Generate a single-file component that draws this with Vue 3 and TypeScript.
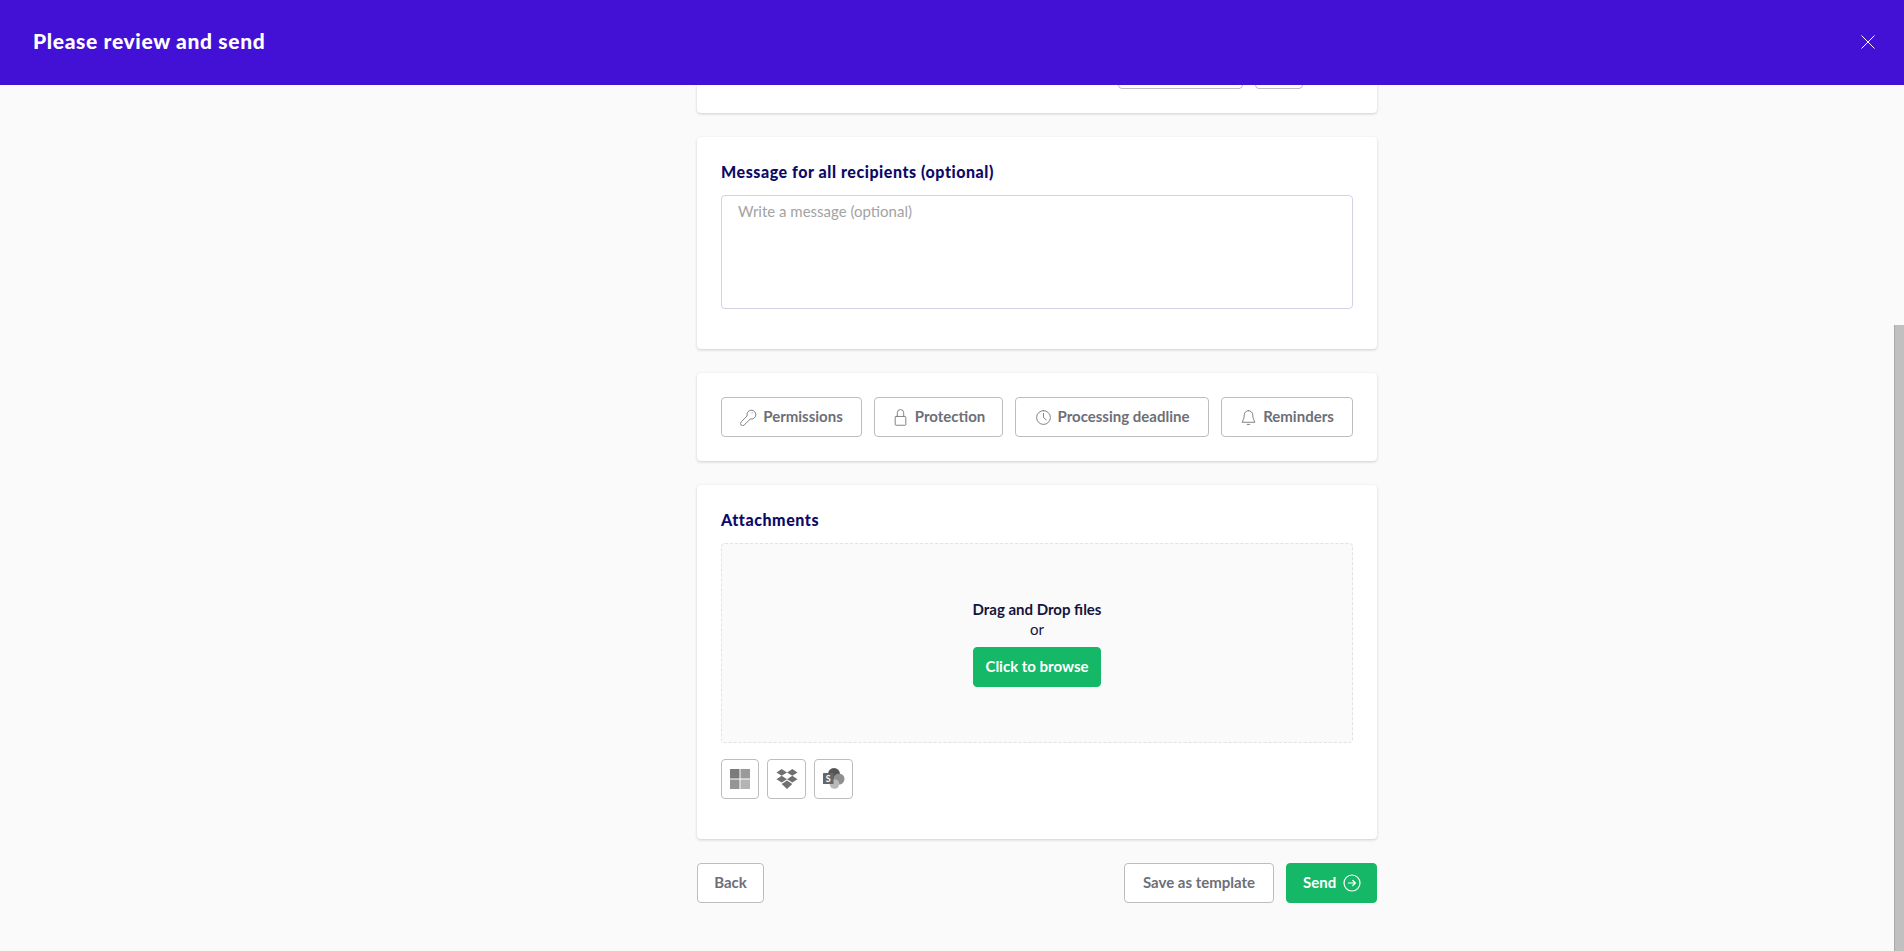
<template>
  <div class="page">
    <header class="topbar">
      <h1>Please review and send</h1>
      <button type="button" class="close" aria-label="Close">
        <svg width="14" height="14" viewBox="0 0 14 14"><path d="M0.5 0.5 13.5 13.5M13.5 0.5 0.5 13.5" stroke="#fff" stroke-width="1" fill="none" /></svg>
      </button>
    </header>

    <div class="body">
      <main class="content">
        <!-- scrolled away under the header, only the lower edge is left -->
        <section class="card card-cut">
          <span class="stub stub-wide"></span>
          <span class="stub stub-small"></span>
        </section>

        <section class="card card-message">
          <h2>Message for all recipients (optional)</h2>
          <textarea placeholder="Write a message (optional)"></textarea>
        </section>

        <section class="card card-options">
          <button v-for="o in options" :key="o.label" type="button" class="btn option" :style="{ width: o.width + 'px' }">
            <svg width="17" height="17" viewBox="0 0 16 16" fill="none" stroke="#77777c" stroke-width="0.85" stroke-linecap="round" stroke-linejoin="round">
              <path v-for="d in o.paths" :key="d" :d="d" />
            </svg>
            <span>{{ o.label }}</span>
          </button>
        </section>

        <section class="card card-attach">
          <h2>Attachments</h2>
          <div class="dropzone">
            <strong>Drag and Drop files</strong>
            <span>or</span>
            <button type="button" class="btn green browse"><span>Click to browse</span></button>
          </div>
          <div class="sources">
            <button type="button" class="btn source first" aria-label="OneDrive">
              <svg width="20" height="20" viewBox="0 0 20 20">
                <rect width="9.5" height="9.5" fill="#7b7b7b" />
                <rect x="10.5" width="9.5" height="9.5" fill="#9a9a9a" />
                <rect y="10.5" width="9.5" height="9.5" fill="#959595" />
                <rect x="10.5" y="10.5" width="9.5" height="9.5" fill="#b4b4b4" />
              </svg>
            </button>
            <button type="button" class="btn source" aria-label="Dropbox">
              <svg width="22" height="20" viewBox="0 0 21 20" fill="#707070">
                <path d="M5.200 0 10.500 3.400 5.200 6.800 0 3.400Z" />
                <path d="M15.800 0 21 3.400 15.800 6.800 10.500 3.400Z" />
                <path d="M5.200 6.800 10.500 10.200 5.200 13.600 0 10.200Z" />
                <path d="M15.800 6.800 21 10.200 15.800 13.600 10.500 10.200Z" />
                <path d="M10.500 11.600 15.800 15 10.500 20 5.200 15Z" />
              </svg>
            </button>
            <button type="button" class="btn source" aria-label="SharePoint">
              <svg width="22" height="22" viewBox="0 0 22 22">
                <circle cx="11" cy="6" r="6" fill="#555" />
                <circle cx="16" cy="11" r="5.500" fill="#8f8f8f" />
                <circle cx="11.500" cy="16" r="4.800" fill="#b9b9b9" />
                <rect x="0" y="5" width="10.500" height="11" rx="0.500" fill="#666" />
                <text x="5.200" y="13.800" text-anchor="middle" class="sp-letter">S</text>
              </svg>
            </button>
          </div>
        </section>

        <footer class="actions">
          <button type="button" class="btn back"><span>Back</span></button>
          <div class="actions-right">
            <button type="button" class="btn save"><span>Save as template</span></button>
            <button type="button" class="btn green send">
              <span>Send</span>
              <svg width="18" height="18" viewBox="0 0 18 18" fill="none" stroke="#fff" stroke-width="1.200" stroke-linecap="round" stroke-linejoin="round">
                <circle cx="9" cy="9" r="8" />
                <path d="M5.500 9H12.200M9.800 6.500 12.400 9 9.800 11.500" />
              </svg>
            </button>
          </div>
        </footer>
      </main>

      <div class="rail"><div class="thumb"></div></div>
    </div>
  </div>
</template>

<script setup lang="ts">
interface OptionButton { label: string; width: number; paths: string[] }

const options: OptionButton[] = [
  {
    label: 'Permissions',
    width: 141,
    paths: [
      'M6.600 6.200a4.200 4.200 0 1 1 3.200 3.200L3.900 15.100a1.300 1.300 0 0 1-2.900-2.900Z',
      'M11.300 3.600h.1',
    ],
  },
  {
    label: 'Protection',
    width: 129,
    paths: [
      'M3.800 7h8.400a.8.8 0 0 1 .8.8v6.700a.8.8 0 0 1-.8.8H3.800a.8.8 0 0 1-.8-.8V7.800a.8.8 0 0 1 .8-.8Z',
      'M5 7V3.500a3 3 0 0 1 6 0V7',
    ],
  },
  {
    label: 'Processing deadline',
    width: 194,
    paths: [
      'M8 1.500a6.500 6.500 0 1 0 0 13 6.500 6.500 0 0 0 0-13Z',
      'M8 4.200V8l2.600 2.200',
    ],
  },
  {
    label: 'Reminders',
    width: 132,
    paths: [
      'M8 1.500a4 4 0 0 0-4 4c0 4-1.500 5.500-2 7h12c-.5-1.500-2-3-2-7a4 4 0 0 0-4-4Z',
      'M6.800 14.500h2.400',
    ],
  },
]
</script>

<style>
html,
body {
  margin: 0;
  background: #fafafa;
  overflow: hidden;
}
</style>

<style scoped>
.page {
  height: 951px;
  display: flex;
  flex-direction: column;
  font-family: "Lato", "Noto Sans", sans-serif;
  background: #fafafa;
  overflow: hidden;
}

.topbar {
  flex: none;
  height: 85px;
  display: flex;
  align-items: center;
  justify-content: space-between;
  padding: 0 29px 0 33px;
  background: #4311d6;
  position: relative;
  z-index: 2;
}
.topbar h1 {
  margin: 0 0 4px;
  font-size: 21px;
  font-weight: 900;
  letter-spacing: 0.65px;
  color: #fff;
}
.close {
  display: flex;
  padding: 0;
  border: none;
  background: none;
  margin-top: -1px;
}

.body {
  flex: 1;
  display: flex;
  min-height: 0;
  position: relative;
}
.content {
  width: 680px;
  margin-left: 697px;
  display: flex;
  flex-direction: column;
  gap: 24px;
}

.card {
  box-sizing: border-box;
  background: #fff;
  border-radius: 4px;
  padding: 24px;
  box-shadow: 0 1px 3px rgba(0, 0, 0, 0.18);
}
.card h2 {
  margin: 1px 0 -2px;
  font-size: 16px;
  line-height: 20px;
  font-weight: 900;
  letter-spacing: 0.55px;
  color: #0c0a66;
}

.card-cut {
  height: 28px;
  padding: 0 74px 24px 0;
  border-radius: 0 0 4px 4px;
  display: flex;
  justify-content: flex-end;
  align-items: flex-end;
  gap: 12px;
  overflow: hidden;
}
.stub {
  box-sizing: border-box;
  height: 40px;
  border: 1px solid #bdbdbd;
  border-radius: 4px;
  flex: none;
}
.stub-wide { width: 125px; }
.stub-small { width: 48px; }

.card-message {
  height: 212px;
}
.card-message textarea {
  display: block;
  box-sizing: border-box;
  width: 100%;
  height: 114px;
  margin-top: 15px;
  padding: 5px 16px;
  border: 1px solid #d4d3e4;
  border-radius: 4px;
  outline: none;
  resize: none;
  font: 400 15px/20px "Lato", "Noto Sans", sans-serif;
}
.card-message textarea::placeholder {
  color: #a3a3a3;
}

.btn {
  box-sizing: border-box;
  height: 40px;
  display: inline-flex;
  align-items: center;
  justify-content: center;
  padding: 0;
  background: #fff;
  border: 1px solid #bdbdbd;
  border-radius: 4px;
  font: 700 15px/20px "Lato", "Noto Sans", sans-serif;
  color: #6d6f78;
}
.btn span {
  margin-top: -2px;
}
.green {
  background: #14b866;
  border-color: #14b866;
  color: #fff;
}

.card-options {
  height: 88px;
  padding: 24px;
  display: flex;
  gap: 12px;
}
.option {
  gap: 6px;
  flex: none;
}

.card-attach {
  height: 354px;
}
.dropzone {
  box-sizing: border-box;
  height: 200px;
  margin-top: 15px;
  display: flex;
  flex-direction: column;
  align-items: center;
  justify-content: center;
  background: #fafafa;
  border: 1px dashed #e2e2e2;
  border-radius: 4px;
  font-size: 15px;
  line-height: 20px;
  color: #14143c;
}
.dropzone strong {
  font-weight: 700;
}
.browse {
  width: 128px;
  margin-top: 8px;
}
.sources {
  display: flex;
  gap: 8px;
  margin-top: 16px;
}
.source {
  width: 39px;
  flex: none;
}
.source.first {
  width: 38px;
}
.sp-letter {
  font: 700 9px "Lato", sans-serif;
  fill: #fff;
}

.actions {
  display: flex;
  justify-content: space-between;
  flex: none;
  background: none;
}
.actions-right {
  display: flex;
  gap: 12px;
}
.back { width: 67px; }
.save { width: 150px; }
.send {
  width: 91px;
  gap: 7px;
  justify-content: flex-start;
  padding-left: 16px;
}

.rail {
  position: absolute;
  top: -85px;
  right: 0;
  bottom: 0;
  width: 10px;
  padding-top: 325px;
  box-sizing: border-box;
}
.thumb {
  height: 626px;
  background: #c0c0c0;
  border-left: 1px solid #a8a8a8;
}
</style>
